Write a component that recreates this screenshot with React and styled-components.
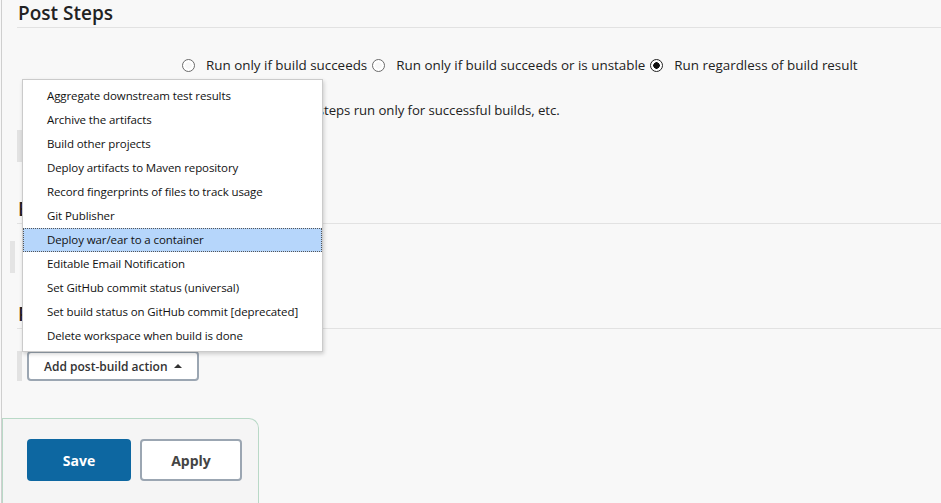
import React from "react";
import styled, { createGlobalStyle } from "styled-components";

const GlobalStyle = createGlobalStyle`
    html, body {
        margin: 0;
        padding: 0;
        background: #f8f8f8;
        font-family: "Open Sans", "Noto Sans", sans-serif;
        color: #1f1f1f;
        overflow: hidden;
    }
`;

const menuItems = [
    "Aggregate downstream test results",
    "Archive the artifacts",
    "Build other projects",
    "Deploy artifacts to Maven repository",
    "Record fingerprints of files to track usage",
    "Git Publisher",
    "Deploy war/ear to a container",
    "Editable Email Notification",
    "Set GitHub commit status (universal)",
    "Set build status on GitHub commit [deprecated]",
    "Delete workspace when build is done",
];

const radios = [
    { label: "Run only if build succeeds", checked: false },
    { label: "Run only if build succeeds or is unstable", checked: false },
    { label: "Run regardless of build result", checked: true },
];

function App() {
    return (
        <>
            <GlobalStyle />
            <Page>
                <Content>
                    <SectionHeading>Post Steps</SectionHeading>
                    <RadioRow>
                        {radios.map((r) => (
                            <RadioLabel key={r.label}>
                                <Radio checked={r.checked} />
                                {r.label}
                            </RadioLabel>
                        ))}
                    </RadioRow>
                    <Description>
                        Should post-build steps run only for successful builds, etc.
                    </Description>
                    <ButtonBar $height={32}>
                        <AddButton>Add post-build step</AddButton>
                    </ButtonBar>

                    <SectionHeading $top={34}>Build Settings</SectionHeading>
                    <Stripe />

                    <SectionHeading $top={28}>Post-build Actions</SectionHeading>
                    <ButtonBar $top={22}>
                        <AddButton>
                            Add post-build action <Caret />
                        </AddButton>
                    </ButtonBar>
                </Content>

                <BottomBar>
                    <SaveButton>Save</SaveButton>
                    <ApplyButton>Apply</ApplyButton>
                </BottomBar>

                <Menu>
                    {menuItems.map((item) => (
                        <MenuItem key={item} $active={item === "Deploy war/ear to a container"}>
                            {item}
                        </MenuItem>
                    ))}
                </Menu>
            </Page>
        </>
    );
}
export default App;

const Page = styled.div`
    position: relative;
    height: 503px;
    margin-left: 1px;
    border-left: 1px solid #cfcfcf;
    display: flex;
    flex-direction: column;
`;
const Content = styled.div`
    padding-left: 15px;
    display: flex;
    flex-direction: column;
`;
const SectionHeading = styled.h2`
    margin: ${(p) => p.$top || 0}px 0 0;
    height: 27px;
    line-height: 27px;
    padding-left: 1px;
    font-size: 19px;
    font-weight: 600;
    color: #222;
    border-bottom: 1px solid #e2e2e2;
`;
const RadioRow = styled.div`
    margin: 27px 0 0 165px;
    height: 20px;
    display: flex;
    align-items: center;
    gap: 5px;
`;
const RadioLabel = styled.label`
    display: flex;
    align-items: center;
    font-size: 13.4px;
    color: #222;
    white-space: nowrap;
`;
const Radio = styled.span`
    width: 11px;
    height: 11px;
    border-radius: 50%;
    border: 1px solid ${(p) => (p.checked ? "#222" : "#6b6b6b")};
    margin-right: 11px;
    background: radial-gradient(circle, ${(p) => (p.checked ? "#111" : "transparent")} 0 3px, #fff 3.5px);
`;
const Description = styled.div`
    margin: 25px 0 0 190px;
    height: 20px;
    line-height: 20px;
    font-size: 13.2px;
    letter-spacing: -0.05px;
    color: #222;
`;
const ButtonBar = styled.div`
    margin-top: ${(p) => p.$top || 10}px;
    height: ${(p) => p.$height || 30}px;
    border-left: 5px solid #e2e2e2;
    padding-left: 5px;
    display: flex;
    align-items: center;
`;
const AddButton = styled.button`
    height: 30px;
    padding: 0 15px;
    background: #fff;
    border: 2px solid #9ba6b2;
    border-radius: 4px;
    font-family: inherit;
    font-size: 12px;
    font-weight: 600;
    color: #333;
    display: flex;
    align-items: center;
    gap: 6px;
`;
const Caret = styled.span`
    width: 0;
    height: 0;
    border-left: 4px solid transparent;
    border-right: 4px solid transparent;
    border-bottom: 4px solid #333;
`;
const Stripe = styled.div`
    margin: 17px 0 0 -7px;
    width: 5px;
    height: 32px;
    background: #e4e4e4;
`;
const BottomBar = styled.div`
    margin-top: auto;
    width: 231px;
    height: 64px;
    padding: 20px 0 0 24px;
    background: #f5f5f5;
    border: 1px solid #b9d9c7;
    border-bottom: none;
    border-top-right-radius: 10px;
    display: flex;
    gap: 9px;
`;
const SaveButton = styled.button`
    width: 104px;
    height: 42px;
    border: none;
    border-radius: 4px;
    background: #0d67a1;
    color: #fff;
    font-family: inherit;
    font-size: 14px;
    font-weight: 700;
`;
const ApplyButton = styled.button`
    width: 102px;
    height: 42px;
    border: 2px solid #9ba6b2;
    border-radius: 4px;
    background: #fff;
    color: #444;
    font-family: inherit;
    font-size: 14px;
    font-weight: 700;
`;
const Menu = styled.ul`
    position: absolute;
    left: 20px;
    top: 79px;
    width: 299px;
    margin: 0;
    padding: 4px 0 3px;
    list-style: none;
    background: #fff;
    border: 1px solid #cbcbcb;
    box-shadow: 1px 2px 4px rgba(0, 0, 0, 0.18);
`;
const MenuItem = styled.li`
    height: 24px;
    line-height: 22px;
    padding-left: 23px;
    font-size: 11.5px;
    letter-spacing: -0.1px;
    color: #111;
    white-space: nowrap;
    border: 1px dotted ${(p) => (p.$active ? "#555" : "transparent")};
    background: ${(p) => (p.$active ? "#b6d6fb" : "transparent")};
    box-sizing: border-box;
`;
